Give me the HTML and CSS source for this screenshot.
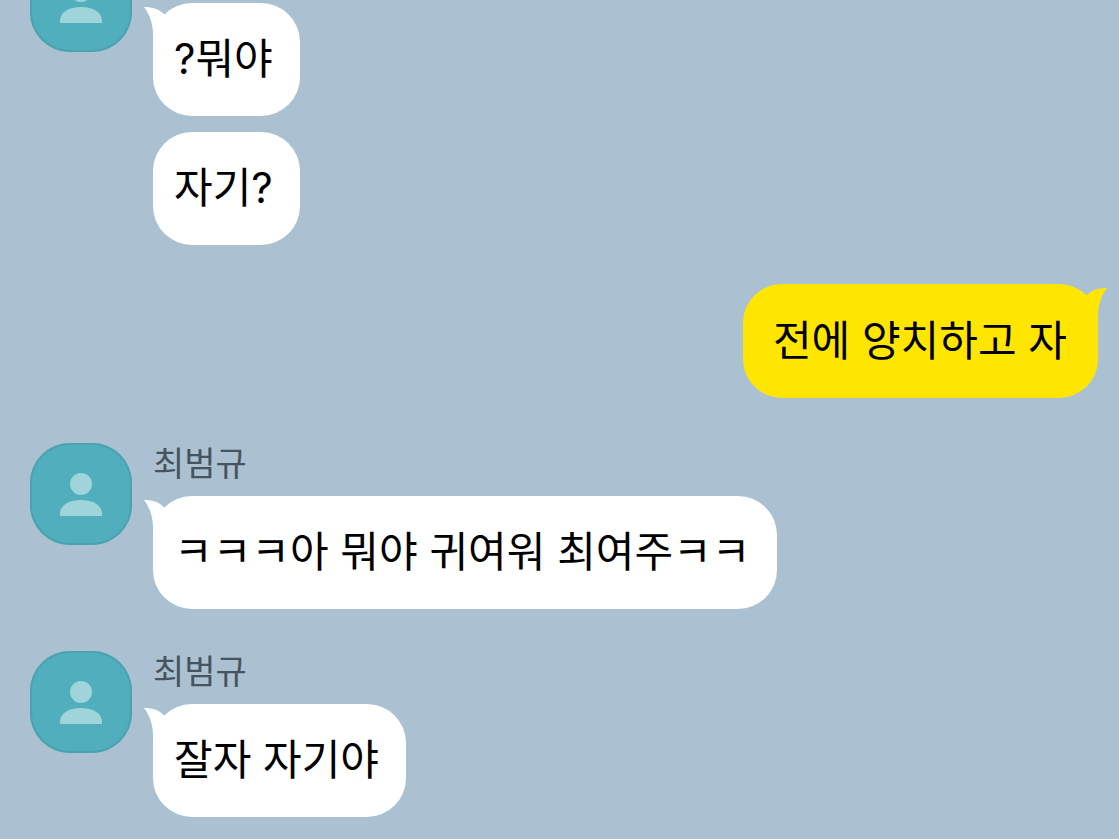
FILE: index.html
```html
<!doctype html>
<html lang="ko">
  <head>
    <meta charset="UTF-8" />
    <meta name="viewport" content="width=device-width, initial-scale=1" />
    <title>최범규</title>
    <link rel="stylesheet" href="styles.css">
  </head>
  <body>
    <svg class="symbols" aria-hidden="true">
      <symbol id="person" viewBox="0 0 102 102">
        <circle cx="51" cy="41" r="11" />
        <path d="M30 73v-2C30 62 39 57 51 57s21 5 21 14v2z" />
      </symbol>
      <symbol id="tail" viewBox="0 0 32 32">
        <path d="M0 0C9 0 15 2 21 8L32 18L20 32H9V28C9 17 6 8 0 0z" />
      </symbol>
    </svg>
    <main class="chat">
      <section class="group earlier">
        <svg class="avatar" aria-hidden="true"><use href="#person" /></svg>
        <div class="messages">
          <p class="bubble"><svg class="tail" aria-hidden="true"><use href="#tail" /></svg>?뭐야</p>
          <p class="bubble">자기?</p>
        </div>
      </section>
      <section class="group mine">
        <div class="messages">
          <p class="bubble"><svg class="tail" aria-hidden="true"><use href="#tail" /></svg>전에 양치하고 자</p>
        </div>
      </section>
      <section class="group">
        <svg class="avatar" aria-hidden="true"><use href="#person" /></svg>
        <div class="messages">
          <h2 class="name">최범규</h2>
          <p class="bubble"><svg class="tail" aria-hidden="true"><use href="#tail" /></svg>ㅋㅋㅋ아 뭐야 귀여워 최여주ㅋㅋ</p>
        </div>
      </section>
      <section class="group">
        <svg class="avatar" aria-hidden="true"><use href="#person" /></svg>
        <div class="messages">
          <h2 class="name">최범규</h2>
          <p class="bubble"><svg class="tail" aria-hidden="true"><use href="#tail" /></svg>잘자 자기야</p>
        </div>
      </section>
    </main>
  </body>
</html>
```
FILE: styles.css
```css
* {
  box-sizing: border-box;
  margin: 0;
  padding: 0;
}

body {
  background: #abc1d1;
  font-family: Inter, "Noto Sans CJK KR", sans-serif;
}

.symbols {
  display: none;
}

/* newest message stays at the bottom, older ones run off the top */
.chat {
  display: flex;
  flex-direction: column;
  justify-content: flex-end;
  gap: 42px;
  height: 100vh;
  padding: 0 21px 22px 30px;
  overflow: hidden;
}

.group {
  display: flex;
  flex-shrink: 0;
  align-items: flex-start;
  gap: 21px;
}

.avatar {
  flex-shrink: 0;
  width: 102px;
  height: 102px;
  border-radius: 40px;
  background: #50aebd;
  box-shadow: inset 0 0 0 2px #4ba3b2;
  fill: #9fd4db;
}

.messages {
  display: flex;
  flex-direction: column;
  align-items: flex-start;
}

.earlier .messages {
  padding-top: 53px;
}

.name {
  margin-bottom: 11px;
  color: #475460;
  font-size: 34px;
  font-weight: 400;
  line-height: 42px;
}

.bubble {
  position: relative;
  padding: 26px 27px 27px 21px;
  border-radius: 39px;
  background: #fff;
  color: #000;
  font-size: 42px;
  line-height: 60px;
}

.bubble + .bubble {
  margin-top: 16px;
}

.tail {
  position: absolute;
  top: 4px;
  left: -9px;
  width: 32px;
  height: 32px;
  fill: #fff;
}

.mine {
  justify-content: flex-end;
  margin: -3px 0 3px;
}

.mine .bubble {
  padding: 27px 31px 27px 30px;
  background: #ffe600;
}

.mine .tail {
  right: -9px;
  left: auto;
  fill: #ffe600;
  transform: scaleX(-1);
}
```
